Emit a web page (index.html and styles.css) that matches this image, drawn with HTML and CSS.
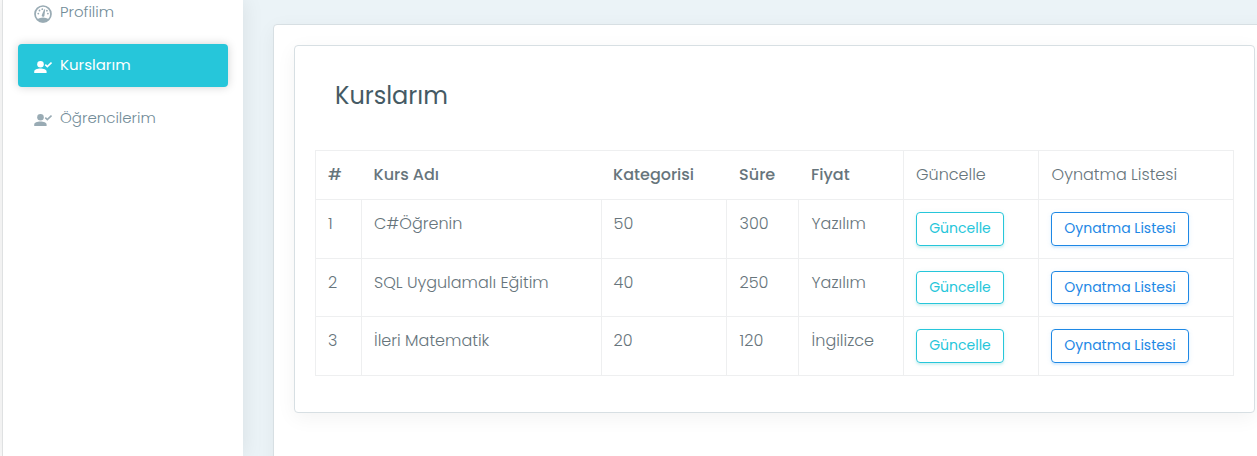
FILE: index.html
```
<!DOCTYPE html>
<html lang="tr">
<head>
<meta charset="utf-8">
<title>Kurslarım</title>
<link rel="stylesheet" href="styles.css">
</head>
<body>
<svg width="0" height="0" class="defs">
  <symbol id="user-check" viewBox="0 0 18 14">
    <circle cx="6.500" cy="4.300" r="3.300"/>
    <path d="M.2 13v-1.300C.2 9.500 3.200 8.600 6.400 8.600s6.200.9 6.200 3.100V13z"/>
    <path d="M11.300 4.600l2 2 4.200-4.100" fill="none" stroke="currentColor" stroke-width="1.600"/>
  </symbol>
</svg>
<div class="layout">
  <nav class="sidebar">
    <a class="item"><svg class="icon gauge" viewBox="0 0 18 18"><circle cx="9" cy="9" r="8" fill="none" stroke="currentColor" stroke-width="1.700"/><path d="M3 14.200Q9 11 15 14.200 12.500 17.500 9 17.500T3 14.200z"/><path d="M7.700 10.200L10.200 4.200l1 .4-.8 6.300a1.400 1.400 0 0 1-2.700-.7z"/><circle cx="4.300" cy="8.600" r=".9"/><circle cx="5.500" cy="5.500" r=".9"/><circle cx="8.300" cy="4.200" r=".9"/><circle cx="12.900" cy="5.700" r=".9"/><circle cx="13.900" cy="8.600" r=".9"/></svg><span>Profilim</span></a>
    <a class="item active"><svg class="icon user"><use href="#user-check"/></svg><span>Kurslarım</span></a>
    <a class="item"><svg class="icon user"><use href="#user-check"/></svg><span>Öğrencilerim</span></a>
  </nav>
  <main class="content">
    <section class="card outer">
      <section class="card inner">
        <h1>Kurslarım</h1>
        <table>
          <colgroup><col class="c1"><col class="c2"><col class="c3"><col class="c4"><col class="c5"><col class="c6"><col class="c7"></colgroup>
          <thead><tr><th>#</th><th>Kurs Adı</th><th class="back">Kategorisi</th><th class="shift">Süre</th><th class="shift">Fiyat</th><td>Güncelle</td><td class="shift">Oynatma Listesi</td></tr></thead>
          <tbody>
            <tr><td>1</td><td>C#Öğrenin</td><td class="back">50</td><td class="shift">300</td><td class="shift">Yazılım</td><td><a class="btn info">Güncelle</a></td><td><a class="btn primary">Oynatma Listesi</a></td></tr>
            <tr class="short"><td>2</td><td>SQL Uygulamalı Eğitim</td><td class="back">40</td><td class="shift">250</td><td class="shift">Yazılım</td><td><a class="btn info">Güncelle</a></td><td><a class="btn primary">Oynatma Listesi</a></td></tr>
            <tr><td>3</td><td>İleri Matematik</td><td class="back">20</td><td class="shift">120</td><td class="shift">İngilizce</td><td><a class="btn info">Güncelle</a></td><td><a class="btn primary">Oynatma Listesi</a></td></tr>
          </tbody>
        </table>
      </section>
    </section>
  </main>
</div>
</body>
</html>
```
FILE: styles.css
```
* { box-sizing: border-box; }
body { margin: 0; height: 456px; overflow: hidden; background: #ebf3f7; color: #67757c; font-family: Poppins, Inter, "Open Sans", sans-serif; font-size: 16px; font-weight: 300; }
.defs { display: block; height: 0; }
.layout { display: flex; width: 1276px; height: 456px; overflow: hidden; background: linear-gradient(to right, #fafafa 2px, transparent 2px); }
.sidebar { width: 241px; margin-left: 2px; flex: none; display: flex; flex-direction: column; gap: 10px; padding: 0 15px; border-left: 1px solid #dfe1e2; background: #fff; box-shadow: 1px 0 20px rgba(0,0,0,.08); z-index: 1; }
.item { display: flex; align-items: center; height: 43px; padding-left: 16px; border-radius: 4px; color: #728c98; font-size: 15px; }
.item:first-child { margin-top: -9px; }
.item svg { color: #99abb4; fill: currentColor; flex: none; }
.item span { margin-left: 8px; padding-bottom: 2px; }
.item.active span { padding-bottom: 3px; }
.gauge { width: 18px; height: 18px; margin-top: 3px; }
.user { width: 18px; height: 14px; margin-top: 3px; }
.active { background: #26c6da; color: #fff; font-weight: 400; box-shadow: 0 0 10px rgba(0,0,0,.18); }
.item.active svg { color: #fff; }
.content { flex: 1; padding: 24px 0 0 30px; }
.card { border: 1px solid #d7dfe3; border-radius: 4px; background: #fff; box-shadow: 0 5px 20px rgba(0,0,0,.05); }
.outer { width: 1003px; height: 520px; padding: 20px; }
.inner { width: 961px; height: 368px; padding: 32px 20px; }
h1 { margin: 0 0 36px 20px; height: 36px; font-size: 24px; line-height: 36px; font-weight: 400; color: #455a64; }
table { width: 919px; border-collapse: collapse; table-layout: fixed; border: 1px solid #eeeff0; }
.c1 { width: 46px; } .c2 { width: 240px; } .c3 { width: 125px; } .c4 { width: 72px; } .c5 { width: 105px; } .c6 { width: 135px; } .c7 { width: 195px; }
th, td { padding: 12px; text-align: left; vertical-align: top; line-height: 24px; white-space: nowrap; }
th { font-weight: 500; border-bottom: 1px solid #eeeff0; }
td { border: 1px solid #eeeff0; }
.shift { padding-left: 12.6px; }
.back { padding-left: 11.6px; }
thead tr { height: 49px; }
tbody tr { height: 59px; }
tbody .short { height: 58px; }
tbody td { padding-bottom: 0; }
.btn { display: inline-flex; align-items: center; justify-content: center; height: 34px; padding-bottom: 2px; border: 1px solid; border-radius: 4px; font-size: 14px; font-weight: 400; line-height: 21px; vertical-align: top; }
.short .btn { height: 33px; padding-bottom: 1px; }
.info { width: 88px; color: #26c6da; box-shadow: 0 2px 2px rgba(40,190,189,.14), 0 1px 5px rgba(40,190,189,.12); }
.primary { width: 138px; color: #1e88e5; box-shadow: 0 2px 2px rgba(66,165,245,.14), 0 1px 5px rgba(66,165,245,.12); }
```
